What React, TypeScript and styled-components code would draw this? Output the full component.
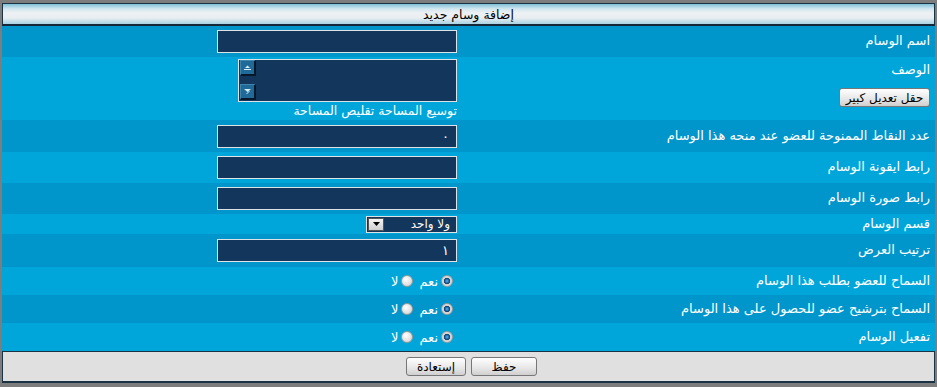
import React from "react"
import styled, { createGlobalStyle } from "styled-components"

const Global = createGlobalStyle`
body {
  margin: 0;
  background: #7d7d7d;
  font-family: "DejaVu Sans", "Noto Sans", sans-serif;
  font-size: 12px;
}
`

const Page = styled.div`
padding: 3px 2px 4px 2px;
direction: rtl;
`
const Header = styled.div`
height: 20px;
border: 1px solid #1a3445;
border-bottom: 2px solid #14283a;
background: linear-gradient(#7fc0d8 0%, #d4e8f0 25%, #eef1f3 45%, #e9eef1 70%, #a9d3e3 100%);
display: flex;
align-items: center;
justify-content: center;
color: #000;
font-size: 12.5px;
`
const Row = styled.div<{ $alt?: boolean; $h: number }>`
display: flex;
height: ${(p) => p.$h}px;
background: ${(p) => (p.$alt ? "#00a6da" : "#0096cb")};
`
const LabelCell = styled.div<{ $top?: boolean }>`
width: 468px;
box-sizing: border-box;
padding: ${(p) => (p.$top ? "5px 5px 0 0" : "0 5px 2px 0")};
display: flex;
flex-direction: column;
justify-content: ${(p) => (p.$top ? "flex-start" : "center")};
align-items: flex-start;
color: #fff;
font-size: 13px;
`
const FieldCell = styled.div`
flex: 1;
box-sizing: border-box;
padding-right: 10px;
display: flex;
flex-direction: column;
justify-content: center;
align-items: flex-start;
`
const TextInput = styled.div`
width: 240px;
height: 23px;
box-sizing: border-box;
border: 1px solid #dfe3e6;
background: #12365c;
color: #fff;
display: flex;
align-items: center;
padding-right: 7px;
font-size: 13px;
`
const Area = styled.div`
width: 219px;
height: 43px;
box-sizing: border-box;
border: 1px solid #dfe3e6;
background: #12365c;
display: flex;
justify-content: flex-end;
padding: 0 0 1px 1px;
`
const ScrollCol = styled.div`
width: 16px;
display: flex;
flex-direction: column;
justify-content: space-between;
`
const ScrollBtn = styled.div`
width: 16px;
height: 16px;
box-sizing: border-box;
background: #1f6a96;
border-top: 1px solid #3d86b0;
border-left: 1px solid #3d86b0;
border-right: 2px solid #08182a;
border-bottom: 2px solid #08182a;
display: flex;
align-items: center;
justify-content: center;
`
const AreaLinks = styled.div`
color: #fff;
font-size: 12.5px;
margin-top: 1px;
`
const BigButton = styled.div<{ $w: number }>`
width: ${(p) => p.$w}px;
height: 19px;
box-sizing: border-box;
border: 1px solid #777;
border-radius: 3px;
background: linear-gradient(#ffffff, #e6e6e6 60%, #cfcfcf);
color: #000;
display: flex;
align-items: center;
justify-content: center;
font-size: 12px;
`
const BigButtonWrap = styled.div`
margin-top: 11px;
`
const Select = styled.div`
width: 91px;
height: 17px;
box-sizing: border-box;
border: 1px solid #dfe3e6;
background: #12365c;
color: #fff;
display: flex;
align-items: center;
justify-content: space-between;
padding-right: 6px;
font-size: 12px;
`
const SelectArrow = styled.div`
width: 16px;
height: 13px;
margin-left: 1px;
background: linear-gradient(#f4f4f4, #cfcfcf);
border: 1px solid #555;
box-sizing: border-box;
display: flex;
align-items: center;
justify-content: center;
`
const RadioGroup = styled.div`
display: flex;
align-items: center;
gap: 3px;
color: #fff;
font-size: 13px;
margin-right: 4px;
`
const Radio = styled.span<{ $on?: boolean }>`
width: 12px;
height: 12px;
border-radius: 50%;
box-sizing: border-box;
border: 1px solid #9a9a9a;
background: ${(p) =>
  p.$on
    ? "radial-gradient(circle, #5fb2e6 0, #1f6fb2 25%, #0d3a66 40%, #cfcfcf 48%, #f4f4f4 100%)"
    : "radial-gradient(circle at 40% 35%, #ffffff, #cdcdcd)"};
`
const RadioText = styled.span`
margin-left: 3px;
`
const Footer = styled.div`
height: 29px;
background: #e0e0e0;
border: 1px solid #1a3445;
border-bottom-width: 2px;
display: flex;
align-items: center;
justify-content: center;
gap: 5px;
padding-left: 6px;
`

const rows: { label: string; kind: string; h: number; value?: string }[] = [
  { label: "اسم الوسام", kind: "input", h: 31 },
  { label: "الوصف", kind: "area", h: 63 },
  { label: "عدد النقاط الممنوحة للعضو عند منحه هذا الوسام", kind: "input", h: 32, value: "٠" },
  { label: "رابط ايقونة الوسام", kind: "input", h: 31 },
  { label: "رابط صورة الوسام", kind: "input", h: 31 },
  { label: "قسم الوسام", kind: "select", h: 20 },
  { label: "ترتيب العرض", kind: "input", h: 33, value: "١" },
  { label: "السماح للعضو بطلب هذا الوسام", kind: "radio", h: 28 },
  { label: "السماح بترشيح عضو للحصول على هذا الوسام", kind: "radio", h: 28 },
  { label: "تفعيل الوسام", kind: "radio", h: 28 },
]

const Field = ({ kind, value }: { kind: string; value?: string }) => {
  if (kind === "input") return <TextInput>{value}</TextInput>
  if (kind === "area")
    return (
      <>
        <Area>
          <ScrollCol>
            <ScrollBtn>
              <svg width="9" height="6" viewBox="0 0 9 6">
                <rect x="1" y="4" width="7" height="1" fill="#d6ebf6" />
                <path d="M2 3 L7 3 L4.5 0.5 Z" fill="#d6ebf6" />
              </svg>
            </ScrollBtn>
            <ScrollBtn>
              <svg width="9" height="7" viewBox="0 0 9 7">
                <path d="M1 1 L8 1 L4.5 4 Z" fill="#d6ebf6" />
                <path d="M3.5 6 L6.5 3" stroke="#d6ebf6" strokeWidth="1" />
              </svg>
            </ScrollBtn>
          </ScrollCol>
        </Area>
        <AreaLinks>توسيع المساحة تقليص المساحة</AreaLinks>
      </>
    )
  if (kind === "select")
    return (
      <Select>
        <span>ولا واحد</span>
        <SelectArrow>
          <svg width="7" height="4" viewBox="0 0 7 4">
            <path d="M0 0 L7 0 L3.5 4 Z" fill="#000" />
          </svg>
        </SelectArrow>
      </Select>
    )
  return (
    <RadioGroup>
      <Radio $on />
      <RadioText>نعم</RadioText>
      <Radio />
      <span>لا</span>
    </RadioGroup>
  )
}

export default function App() {
  return (
    <Page>
      <Global />
      <Header>إضافة وسام جديد</Header>
      {rows.map((r, i) => (
        <Row key={i} $alt={i % 2 === 1} $h={r.h}>
          <LabelCell $top={r.kind === "area"}>
            <span>{r.label}</span>
            {r.kind === "area" && (
              <BigButtonWrap>
                <BigButton $w={91}>حقل تعديل كبير</BigButton>
              </BigButtonWrap>
            )}
          </LabelCell>
          <FieldCell>
            <Field kind={r.kind} value={r.value} />
          </FieldCell>
        </Row>
      ))}
      <Footer>
        <BigButton $w={66}>حفظ</BigButton>
        <BigButton $w={60}>إستعادة</BigButton>
      </Footer>
    </Page>
  )
}
